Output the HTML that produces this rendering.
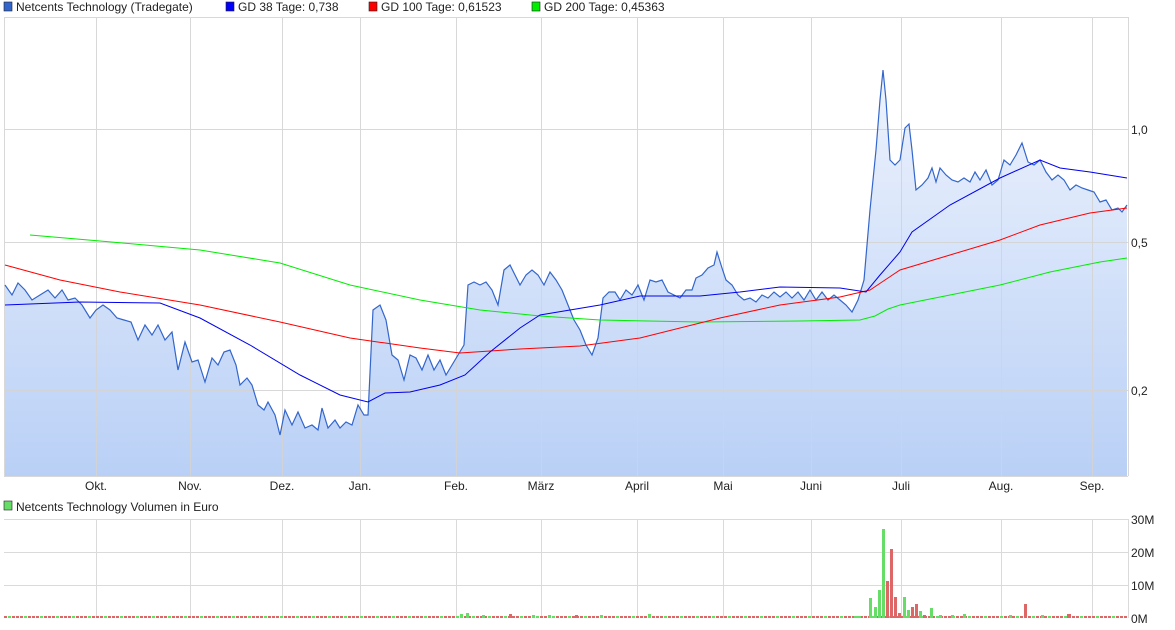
<!DOCTYPE html>
<html><head><meta charset="utf-8"><style>
html,body{margin:0;padding:0;background:#fff;width:1175px;height:630px;overflow:hidden}
svg{display:block;font-family:"Liberation Sans",sans-serif}
</style></head><body>
<svg width="1175" height="630" viewBox="0 0 1175 630" xmlns="http://www.w3.org/2000/svg">
<defs>
<linearGradient id="g" gradientUnits="userSpaceOnUse" x1="0" y1="70" x2="0" y2="476">
<stop offset="0" stop-color="#eef3fd"/><stop offset="1" stop-color="#b9d0f6"/>
</linearGradient>
</defs>
<rect x="4" y="2" width="8" height="9" fill="#3366cc" stroke="#222" stroke-width="0.6"/>
<text x="16" y="11" font-size="12" fill="#222">Netcents Technology (Tradegate)</text>
<rect x="226" y="2" width="8" height="9" fill="#0000ff" stroke="#222" stroke-width="0.6"/>
<text x="238" y="11" font-size="12" fill="#222">GD 38 Tage: 0,738</text>
<rect x="369" y="2" width="8" height="9" fill="#ff0000" stroke="#222" stroke-width="0.6"/>
<text x="381" y="11" font-size="12" fill="#222">GD 100 Tage: 0,61523</text>
<rect x="532" y="2" width="8" height="9" fill="#00ee00" stroke="#222" stroke-width="0.6"/>
<text x="544" y="11" font-size="12" fill="#222">GD 200 Tage: 0,45363</text>
<path fill="url(#g)" stroke="none" d="M5,285 L5,285 12,295 18,283 25,290 32,300 40,295 48,290 55,298 62,290 68,300 75,298 82,305 90,318 96,310 103,305 110,310 117,318 124,320 131,322 138,340 145,325 152,335 158,325 165,340 172,332 178,370 185,342 192,362 198,360 205,382 212,358 218,365 224,352 230,350 236,365 240,385 247,378 252,385 258,405 264,410 268,402 275,415 280,435 285,410 292,425 298,412 305,428 312,425 318,430 322,408 328,428 335,420 340,428 346,422 352,425 358,405 364,415 368,415 373,310 380,305 386,320 392,355 398,360 404,380 410,355 416,358 422,370 428,355 434,370 440,360 446,375 452,365 458,355 464,345 468,285 474,282 480,285 486,282 492,290 498,305 504,270 510,265 515,275 520,285 526,275 532,270 538,275 544,285 550,272 556,280 562,290 568,305 574,320 580,330 586,345 592,355 598,338 603,298 609,292 615,292 620,300 626,290 632,295 638,285 644,300 650,280 656,282 662,280 668,292 674,295 680,298 686,290 692,290 696,278 702,275 708,268 714,265 717,252 722,268 726,280 732,285 738,295 744,300 750,298 756,302 762,295 768,298 774,292 780,297 786,292 792,298 798,292 804,300 810,290 816,300 822,292 828,300 834,295 840,300 846,305 852,312 858,300 864,280 870,210 876,150 880,100 883,70 886,100 890,160 895,165 900,160 905,128 909,124 912,150 916,190 922,185 928,178 932,168 936,182 940,168 946,175 952,180 958,182 964,178 970,182 975,172 980,180 986,170 992,185 998,180 1004,160 1010,165 1016,155 1022,143 1028,162 1034,165 1040,160 1046,172 1052,180 1058,175 1064,180 1070,190 1076,185 1082,188 1088,190 1094,192 1100,202 1106,200 1112,210 1118,208 1122,212 1127,205 L1127,476 L5,476 Z"/>
<g stroke="#d4d4d4" stroke-width="1" opacity="0.9">
<line x1="4.5" y1="17" x2="4.5" y2="476"/><line x1="1128.5" y1="17" x2="1128.5" y2="476"/>
<line x1="4" y1="17.5" x2="1128" y2="17.5"/><line x1="4" y1="476.5" x2="1128" y2="476.5"/>
<line x1="4" y1="129.5" x2="1128" y2="129.5"/><line x1="4" y1="242.5" x2="1128" y2="242.5"/><line x1="4" y1="390.5" x2="1128" y2="390.5"/>
<line x1="96.5" y1="17" x2="96.5" y2="476"/><line x1="190.5" y1="17" x2="190.5" y2="476"/><line x1="282.5" y1="17" x2="282.5" y2="476"/><line x1="360.5" y1="17" x2="360.5" y2="476"/><line x1="456.5" y1="17" x2="456.5" y2="476"/><line x1="541.5" y1="17" x2="541.5" y2="476"/><line x1="637.5" y1="17" x2="637.5" y2="476"/><line x1="723.5" y1="17" x2="723.5" y2="476"/><line x1="811.5" y1="17" x2="811.5" y2="476"/><line x1="901.5" y1="17" x2="901.5" y2="476"/><line x1="1001.5" y1="17" x2="1001.5" y2="476"/><line x1="1092.5" y1="17" x2="1092.5" y2="476"/>
</g>
<path fill="none" stroke="#3366cc" stroke-width="1.2" d="M5,285 12,295 18,283 25,290 32,300 40,295 48,290 55,298 62,290 68,300 75,298 82,305 90,318 96,310 103,305 110,310 117,318 124,320 131,322 138,340 145,325 152,335 158,325 165,340 172,332 178,370 185,342 192,362 198,360 205,382 212,358 218,365 224,352 230,350 236,365 240,385 247,378 252,385 258,405 264,410 268,402 275,415 280,435 285,410 292,425 298,412 305,428 312,425 318,430 322,408 328,428 335,420 340,428 346,422 352,425 358,405 364,415 368,415 373,310 380,305 386,320 392,355 398,360 404,380 410,355 416,358 422,370 428,355 434,370 440,360 446,375 452,365 458,355 464,345 468,285 474,282 480,285 486,282 492,290 498,305 504,270 510,265 515,275 520,285 526,275 532,270 538,275 544,285 550,272 556,280 562,290 568,305 574,320 580,330 586,345 592,355 598,338 603,298 609,292 615,292 620,300 626,290 632,295 638,285 644,300 650,280 656,282 662,280 668,292 674,295 680,298 686,290 692,290 696,278 702,275 708,268 714,265 717,252 722,268 726,280 732,285 738,295 744,300 750,298 756,302 762,295 768,298 774,292 780,297 786,292 792,298 798,292 804,300 810,290 816,300 822,292 828,300 834,295 840,300 846,305 852,312 858,300 864,280 870,210 876,150 880,100 883,70 886,100 890,160 895,165 900,160 905,128 909,124 912,150 916,190 922,185 928,178 932,168 936,182 940,168 946,175 952,180 958,182 964,178 970,182 975,172 980,180 986,170 992,185 998,180 1004,160 1010,165 1016,155 1022,143 1028,162 1034,165 1040,160 1046,172 1052,180 1058,175 1064,180 1070,190 1076,185 1082,188 1088,190 1094,192 1100,202 1106,200 1112,210 1118,208 1122,212 1127,205"/>
<path fill="none" stroke="#00ee00" stroke-width="1" d="M30,235 100,241 200,250 280,263 350,285 420,300 480,310 540,316 600,320 700,322 800,321 860,320 875,316 888,309 900,305 950,295 1000,285 1050,272 1100,262 1127,258"/>
<path fill="none" stroke="#ff0000" stroke-width="1" d="M5,265 60,280 120,292 200,305 280,322 350,338 420,348 460,353 520,349 580,346 640,338 720,318 780,305 840,297 870,290 885,280 900,270 950,255 1000,240 1040,225 1090,213 1127,208"/>
<path fill="none" stroke="#0000ee" stroke-width="1" d="M5,305 80,302 160,303 200,318 250,345 300,375 340,395 368,402 385,393 410,392 440,385 465,375 490,352 520,328 540,315 570,310 600,305 640,296 700,296 740,292 780,287 840,288 866,292 880,275 900,252 912,232 950,205 1000,178 1040,160 1060,168 1090,172 1127,178"/>
<g font-size="12" fill="#222">
<text x="1131" y="134">1,0</text><text x="1131" y="247">0,5</text><text x="1131" y="395">0,2</text>
<g text-anchor="middle">
<text x="96" y="490">Okt.</text><text x="190" y="490">Nov.</text><text x="282" y="490">Dez.</text><text x="360" y="490">Jan.</text><text x="456" y="490">Feb.</text><text x="541" y="490">März</text><text x="637" y="490">April</text><text x="723" y="490">Mai</text><text x="811" y="490">Juni</text><text x="901" y="490">Juli</text><text x="1001" y="490">Aug.</text><text x="1092" y="490">Sep.</text>
</g>
</g>
<rect x="4" y="501" width="8" height="9" fill="#66dd66" stroke="#222" stroke-width="0.6"/>
<text x="16" y="511" font-size="12" fill="#222">Netcents Technology Volumen in Euro</text>
<g stroke="#dadada" stroke-width="1">
<line x1="4" y1="519.5" x2="1128" y2="519.5"/><line x1="4" y1="552.5" x2="1128" y2="552.5"/><line x1="4" y1="585.5" x2="1128" y2="585.5"/>
<line x1="1128.5" y1="519" x2="1128.5" y2="618"/>
<line x1="96.5" y1="519" x2="96.5" y2="618"/><line x1="190.5" y1="519" x2="190.5" y2="618"/><line x1="282.5" y1="519" x2="282.5" y2="618"/><line x1="360.5" y1="519" x2="360.5" y2="618"/><line x1="456.5" y1="519" x2="456.5" y2="618"/><line x1="541.5" y1="519" x2="541.5" y2="618"/><line x1="637.5" y1="519" x2="637.5" y2="618"/><line x1="723.5" y1="519" x2="723.5" y2="618"/><line x1="811.5" y1="519" x2="811.5" y2="618"/><line x1="901.5" y1="519" x2="901.5" y2="618"/><line x1="1001.5" y1="519" x2="1001.5" y2="618"/><line x1="1092.5" y1="519" x2="1092.5" y2="618"/>
</g>
<line x1="4" y1="617" x2="1128" y2="617" stroke="#dd6666" stroke-width="2" stroke-dasharray="3,1"/>
<line x1="8" y1="617" x2="1128" y2="617" stroke="#66dd66" stroke-width="2" stroke-dasharray="3,13"/>
<g fill="#66dd66">
<rect x="460" y="614" width="3" height="4"/><rect x="466" y="613" width="3" height="5"/><rect x="482" y="615" width="3" height="3"/><rect x="532" y="615" width="3" height="3"/><rect x="548" y="615" width="3" height="3"/><rect x="600" y="615" width="3" height="3"/><rect x="648" y="614" width="3" height="4"/>
<rect x="854" y="616" width="3" height="2"/><rect x="858" y="616" width="3" height="2"/>
<rect x="869" y="598" width="3" height="20"/><rect x="874" y="607" width="3" height="11"/><rect x="878" y="590" width="3" height="28"/><rect x="882" y="529" width="3" height="89"/>
<rect x="903" y="597" width="3" height="21"/><rect x="907" y="610" width="3" height="8"/><rect x="919" y="611" width="3" height="7"/><rect x="930" y="608" width="3" height="10"/><rect x="939" y="615" width="3" height="3"/><rect x="951" y="615" width="3" height="3"/><rect x="963" y="614" width="3" height="4"/><rect x="1009" y="615" width="3" height="3"/><rect x="1041" y="615" width="3" height="3"/>
</g>
<g fill="#dd6666">
<rect x="509" y="614" width="3" height="4"/><rect x="575" y="615" width="3" height="3"/><rect x="886" y="581" width="3" height="37"/><rect x="890" y="549" width="3" height="69"/><rect x="894" y="597" width="3" height="21"/><rect x="898" y="613" width="3" height="5"/>
<rect x="911" y="607" width="3" height="11"/><rect x="915" y="604" width="3" height="14"/><rect x="923" y="615" width="3" height="3"/><rect x="1024" y="604" width="3" height="14"/><rect x="1068" y="614" width="3" height="4"/><rect x="1067" y="614" width="3" height="4"/>
</g>
<g font-size="12" fill="#222">
<text x="1131" y="524">30M</text><text x="1131" y="557">20M</text><text x="1131" y="590">10M</text><text x="1131" y="623">0M</text>
</g>
</svg>
</body></html>
